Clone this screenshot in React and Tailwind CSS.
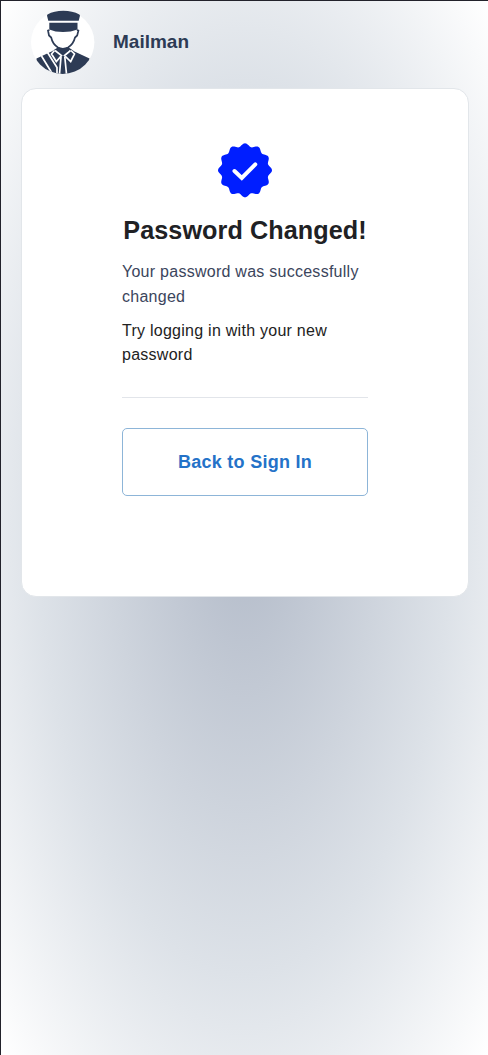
const scallop = Array.from({ length: 192 }, (_, i) => {
  const a = (i / 192) * Math.PI * 2;
  const r = 25.4 + 1.6 * Math.cos(12 * a);
  return `${(28 + r * Math.sin(a)).toFixed(2)},${(28.3 - r * Math.cos(a)).toFixed(2)}`;
}).join(" ");

function MailmanLogo() {
  return (
    <svg viewBox="0 0 64 64" className="size-16 shrink-0" aria-hidden="true">
      <defs>
        <clipPath id="disc">
          <circle cx="31.700" cy="32.300" r="31.700" />
        </clipPath>
      </defs>
      <circle cx="31.700" cy="32.300" r="31.700" fill="#fff" />
      <g clipPath="url(#disc)">
        <path d="M20.500 41.500L26 38H38.500L43.500 41.500L58.500 48.500V66H5.500V48.500Z" fill="#2d3b55" />
        <g fill="none" stroke="#fff" strokeWidth="1.700">
          <path d="M10.500 46L21.500 64M16.500 42.500L26 57.500V64" />
          <path d="M23.500 40.500L20.500 44L25.300 51.500L30.500 45.500L24 40.500M40 40.500L43.500 44L39.700 51.500L33.500 45.500L39.500 40.500" />
          <path d="M30 47L28.500 64M33.800 47L35.500 64" />
        </g>
      </g>
      <path d="M18.500 20L17 20.500L18 25.500L20.200 27.500Q21.500 34 27 37.500Q31.700 40 37 37.500Q42.500 34 44 27.500L46.200 25.500L47.400 20.500L45.900 20" fill="#fff" stroke="#2d3b55" strokeWidth="1.700" />
      <path d="M26.500 38Q32 40 38 37.500L37.500 41L32 43.500L26.500 41Z" fill="#2d3b55" />
      <g fill="#2d3b55">
        <path d="M16.500 4.500Q23 .8 32.300 .8T48.300 4.500Q49.200 5 48.900 6L47.700 10.800H17.300L16.100 6Q15.800 5 16.500 4.500Z" />
        <path d="M18.300 12.800H46.500V19.500Q40 22 32 22T18.300 19.500Z" />
      </g>
    </svg>
  );
}

function VerifiedBadge() {
  return (
    <svg viewBox="0 0 56 56" className="size-14" aria-hidden="true">
      <polygon points={scallop} fill="#001eff" />
      <path d="M17.500 29L24.800 36L38.300 22.300" fill="none" stroke="#fff" strokeWidth="4" strokeLinecap="round" strokeLinejoin="miter" />
    </svg>
  );
}

export default function App() {
  return (
    <div className="h-[1055px] w-[488px] overflow-hidden border-l border-t border-[#22222b] bg-[radial-gradient(ellipse_at_center,#b3bbc9_0%,#dde2e8_60%,#ffffff_100%)] pl-[20px] pt-[9px] font-['Liberation_Sans',Arial,sans-serif]">
      <header className="flex h-16 items-center gap-[18px] pl-[10px]">
        <MailmanLogo />
        <h1 className="text-[19px] leading-6 font-bold text-[#2d3b55]">Mailman</h1>
      </header>
      <main className="mt-[14px] flex h-[509px] w-[448px] flex-col items-center rounded-[15px] border border-[#e2e6ea] bg-white px-[100px] pt-[53px]">
        <VerifiedBadge />
        <h2 className="mt-[16px] text-[25.200px] leading-8 font-bold tracking-[0.070px] whitespace-nowrap text-[#202124]">Password Changed!</h2>
        <p className="mt-[13px] w-full text-[16px] leading-[25px] tracking-[0.260px] text-[#3b455c]">Your password was successfully changed</p>
        <p className="mt-[10px] w-full text-[16px] leading-6 tracking-[0.260px] text-[#222222]">Try logging in with your new password</p>
        <hr className="mt-[30px] w-full border-[#e2e5ea]" />
        <button className="mt-[30px] h-[68px] w-full rounded-[5px] border border-[#8db5d8] text-[18px] leading-6 font-bold tracking-[0.280px] text-[#2472c8]">Back to Sign In</button>
      </main>
    </div>
  );
}
